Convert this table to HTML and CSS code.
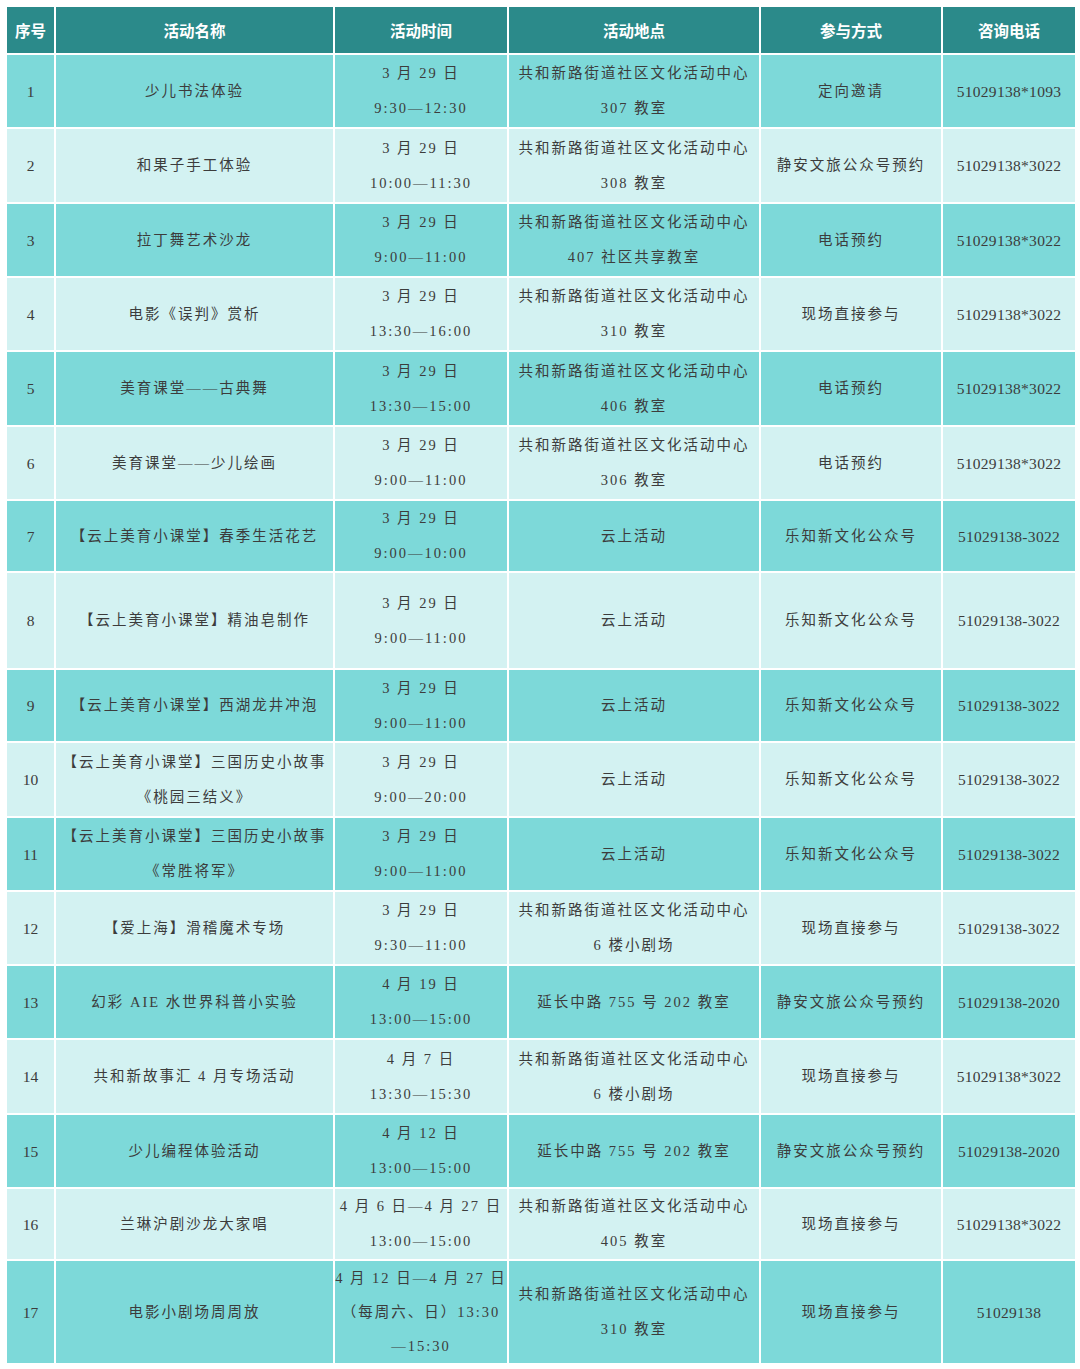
FILE: index.html
```html
<!DOCTYPE html>
<html lang="zh-CN">
<head>
<meta charset="utf-8">
<title>活动安排</title>
<link rel="stylesheet" href="styles.css">
</head>
<body>
<table class="schedule">
  <colgroup>
    <col class="c-no"><col class="c-name"><col class="c-time"><col class="c-place"><col class="c-way"><col class="c-tel">
  </colgroup>
  <thead>
    <tr class="head">
      <th>序号</th><th>活动名称</th><th>活动时间</th><th>活动地点</th><th>参与方式</th><th>咨询电话</th>
    </tr>
  </thead>
  <tbody>
    <tr class="dark">
      <td class="no">1</td><td>少儿书法体验</td><td>3 月 29 日<br>9:30—12:30</td><td>共和新路街道社区文化活动中心<br>307 教室</td><td>定向邀请</td><td class="tel">51029138*1093</td>
    </tr>
    <tr class="light h73">
      <td class="no">2</td><td>和果子手工体验</td><td>3 月 29 日<br>10:00—11:30</td><td>共和新路街道社区文化活动中心<br>308 教室</td><td>静安文旅公众号预约</td><td class="tel">51029138*3022</td>
    </tr>
    <tr class="dark">
      <td class="no">3</td><td>拉丁舞艺术沙龙</td><td>3 月 29 日<br>9:00—11:00</td><td>共和新路街道社区文化活动中心<br>407 社区共享教室</td><td>电话预约</td><td class="tel">51029138*3022</td>
    </tr>
    <tr class="light">
      <td class="no">4</td><td>电影《误判》赏析</td><td>3 月 29 日<br>13:30—16:00</td><td>共和新路街道社区文化活动中心<br>310 教室</td><td>现场直接参与</td><td class="tel">51029138*3022</td>
    </tr>
    <tr class="dark h73">
      <td class="no">5</td><td>美育课堂——古典舞</td><td>3 月 29 日<br>13:30—15:00</td><td>共和新路街道社区文化活动中心<br>406 教室</td><td>电话预约</td><td class="tel">51029138*3022</td>
    </tr>
    <tr class="light">
      <td class="no">6</td><td>美育课堂——少儿绘画</td><td>3 月 29 日<br>9:00—11:00</td><td>共和新路街道社区文化活动中心<br>306 教室</td><td>电话预约</td><td class="tel">51029138*3022</td>
    </tr>
    <tr class="dark h70">
      <td class="no">7</td><td>【云上美育小课堂】春季生活花艺</td><td>3 月 29 日<br>9:00—10:00</td><td>云上活动</td><td>乐知新文化公众号</td><td class="tel">51029138-3022</td>
    </tr>
    <tr class="light h95">
      <td class="no">8</td><td>【云上美育小课堂】精油皂制作</td><td>3 月 29 日<br>9:00—11:00</td><td>云上活动</td><td>乐知新文化公众号</td><td class="tel">51029138-3022</td>
    </tr>
    <tr class="dark h71">
      <td class="no">9</td><td>【云上美育小课堂】西湖龙井冲泡</td><td>3 月 29 日<br>9:00—11:00</td><td>云上活动</td><td>乐知新文化公众号</td><td class="tel">51029138-3022</td>
    </tr>
    <tr class="light h73">
      <td class="no">10</td><td>【云上美育小课堂】三国历史小故事<br>《桃园三结义》</td><td>3 月 29 日<br>9:00—20:00</td><td>云上活动</td><td>乐知新文化公众号</td><td class="tel">51029138-3022</td>
    </tr>
    <tr class="dark">
      <td class="no">11</td><td>【云上美育小课堂】三国历史小故事<br>《常胜将军》</td><td>3 月 29 日<br>9:00—11:00</td><td>云上活动</td><td>乐知新文化公众号</td><td class="tel">51029138-3022</td>
    </tr>
    <tr class="light">
      <td class="no">12</td><td>【爱上海】滑稽魔术专场</td><td>3 月 29 日<br>9:30—11:00</td><td>共和新路街道社区文化活动中心<br>6 楼小剧场</td><td>现场直接参与</td><td class="tel">51029138-3022</td>
    </tr>
    <tr class="dark">
      <td class="no">13</td><td>幻彩 AIE 水世界科普小实验</td><td>4 月 19 日<br>13:00—15:00</td><td>延长中路 755 号 202 教室</td><td>静安文旅公众号预约</td><td class="tel">51029138-2020</td>
    </tr>
    <tr class="light h73">
      <td class="no">14</td><td>共和新故事汇 4 月专场活动</td><td>4 月 7 日<br>13:30—15:30</td><td>共和新路街道社区文化活动中心<br>6 楼小剧场</td><td>现场直接参与</td><td class="tel">51029138*3022</td>
    </tr>
    <tr class="dark">
      <td class="no">15</td><td>少儿编程体验活动</td><td>4 月 12 日<br>13:00—15:00</td><td>延长中路 755 号 202 教室</td><td>静安文旅公众号预约</td><td class="tel">51029138-2020</td>
    </tr>
    <tr class="light h68">
      <td class="no">16</td><td>兰琳沪剧沙龙大家唱</td><td>4 月 6 日—4 月 27 日<br>13:00—15:00</td><td>共和新路街道社区文化活动中心<br>405 教室</td><td>现场直接参与</td><td class="tel">51029138*3022</td>
    </tr>
    <tr class="dark h102">
      <td class="no">17</td><td>电影小剧场周周放</td><td class="tight">4 月 12 日—4 月 27 日<br>（每周六、日）13:30<br>—15:30</td><td>共和新路街道社区文化活动中心<br>310 教室</td><td>现场直接参与</td><td class="tel">51029138</td>
    </tr>
  </tbody>
</table>
</body>
</html>
```
FILE: styles.css
```css
html, body {
  margin: 0;
  padding: 0;
  background: #ffffff;
}

.schedule {
  margin: 5px;
  width: 1070px;
  table-layout: fixed;
  border-collapse: collapse;
  font-family: "Liberation Serif", "Noto Sans CJK SC", serif;
  color: #3c3c3c;
}

.c-no { width: 49px; }
.c-name { width: 279px; }
.c-time { width: 174px; }
.c-place { width: 252px; }
.c-way { width: 182px; }
.c-tel { width: 134px; }

.schedule th,
.schedule td {
  border: 2px solid #ffffff;
  padding: 0;
  text-align: center;
  vertical-align: middle;
  white-space: nowrap;
  overflow: hidden;
}

.head th {
  height: 46px;
  background: #2b8a8a;
  color: #ffffff;
  font-family: "Noto Sans CJK SC", sans-serif;
  font-weight: 700;
  font-size: 15.5px;
  letter-spacing: 0;
}

.schedule td {
  height: 72px;
  font-size: 14.5px;
  line-height: 35px;
  letter-spacing: 2px;
}

.schedule td.no {
  font-size: 15.5px;
  letter-spacing: 0;
}

.schedule td.tel {
  font-size: 15.5px;
  letter-spacing: 0.3px;
}

.schedule td.tight {
  line-height: 34px;
}

.dark td { background: #7dd9d9; }
.light td { background: #d3f2f2; }

.h68 td { height: 68px; }
.h70 td { height: 70px; }
.h71 td { height: 71px; }
.h73 td { height: 73px; }
.h95 td { height: 95px; }
.h102 td { height: 102px; }
```
